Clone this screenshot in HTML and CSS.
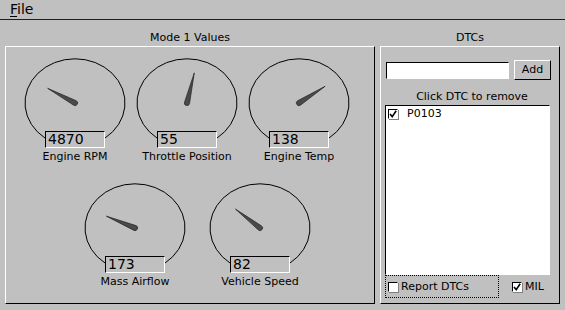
FILE: index.html
```html
<!DOCTYPE html>
<html>
<head>
    <title>OBD Simulator</title>
    <meta http-equiv="Content-Type" content="text/html;charset=utf-8">
    <link rel="stylesheet" href="styles.css">
</head>
<body>
<div class="menubar"><span class="menu-item"><u>F</u>ile</span></div>
<div class="main">
    <section class="group group-mode">
        <div class="group-title">Mode 1 Values</div>
        <div class="frame frame-mode">
            <div class="gauge-row row-top">
                <div class="gauge">
                    <svg class="dial" width="100" height="82" viewBox="0 0 100 82">
                        <path class="arc" d="M20 79 A50 44 0 1 1 80 79"/>
                        <g transform="translate(50 44) rotate(-61.8)"><path class="needle" d="M0 -31 L2.6 0 A2.6 2.6 0 0 1 -2.6 0 Z"/></g>
                    </svg>
                    <div class="readout">4870</div>
                    <div class="gauge-label">Engine RPM</div>
                </div>
                <div class="gauge">
                    <svg class="dial" width="100" height="82" viewBox="0 0 100 82">
                        <path class="arc" d="M20 79 A50 44 0 1 1 80 79"/>
                        <g transform="translate(50 44) rotate(13.6)"><path class="needle" d="M0 -31 L2.6 0 A2.6 2.6 0 0 1 -2.6 0 Z"/></g>
                    </svg>
                    <div class="readout">55</div>
                    <div class="gauge-label">Throttle Position</div>
                </div>
                <div class="gauge">
                    <svg class="dial" width="100" height="82" viewBox="0 0 100 82">
                        <path class="arc" d="M20 79 A50 44 0 1 1 80 79"/>
                        <g transform="translate(50 44) rotate(57.4)"><path class="needle" d="M0 -31 L2.6 0 A2.6 2.6 0 0 1 -2.6 0 Z"/></g>
                    </svg>
                    <div class="readout">138</div>
                    <div class="gauge-label">Engine Temp</div>
                </div>
            </div>
            <div class="gauge-row row-bottom">
                <div class="gauge">
                    <svg class="dial" width="100" height="82" viewBox="0 0 100 82">
                        <path class="arc" d="M20 79 A50 44 0 1 1 80 79"/>
                        <g transform="translate(50 44) rotate(-67.5)"><path class="needle" d="M0 -31 L2.6 0 A2.6 2.6 0 0 1 -2.6 0 Z"/></g>
                    </svg>
                    <div class="readout">173</div>
                    <div class="gauge-label">Mass Airflow</div>
                </div>
                <div class="gauge">
                    <svg class="dial" width="100" height="82" viewBox="0 0 100 82">
                        <path class="arc" d="M20 79 A50 44 0 1 1 80 79"/>
                        <g transform="translate(50 44) rotate(-52.4)"><path class="needle" d="M0 -31 L2.6 0 A2.6 2.6 0 0 1 -2.6 0 Z"/></g>
                    </svg>
                    <div class="readout">82</div>
                    <div class="gauge-label">Vehicle Speed</div>
                </div>
            </div>
        </div>
    </section>
    <section class="group group-dtc">
        <div class="group-title">DTCs</div>
        <div class="frame frame-dtc">
            <div class="add-row">
                <div class="dtc-input"></div>
                <div class="btn">Add</div>
            </div>
            <div class="list-title">Click DTC to remove</div>
            <div class="dtc-list">
                <div class="dtc-item">
                    <span class="check"><svg width="8" height="8" viewBox="0 0 8 8"><path d="M1 4 L3.2 6.6 L7.2 0.8"/></svg></span>
                    <span>P0103</span>
                </div>
            </div>
            <div class="options">
                <div class="opt opt-report"><span class="check"></span>Report DTCs</div>
                <div class="opt opt-mil"><span class="check"><svg width="8" height="8" viewBox="0 0 8 8"><path d="M1 4 L3.2 6.6 L7.2 0.8"/></svg></span>MIL</div>
            </div>
        </div>
    </section>
</div>
</body>
</html>
```

FILE: styles.css
```css
*{box-sizing: border-box;}
body{margin:0;padding:0;width:565px;height:310px;overflow:hidden;background-color:#c0c0c0;font-family:"DejaVu Sans",sans-serif;font-size:11px;color:#000;}
.menubar{height:20px;border-bottom:1px solid #1e1e1e;padding-left:10px;font-size:14px;line-height:19px;}
.menu-item u{text-decoration-thickness:1px;text-underline-offset:2px;}
.main{display:flex;gap:5px;padding:10px 5px 0 5px;}
.group-title{height:16px;line-height:16px;text-align:center;}
.frame{height:258px;border:1px solid;border-color:#fff #000 #000 #fff;}
.group-mode .frame{width:370px;}
.group-dtc .frame{width:180px;}

/* gauges */
.frame-mode{padding-top:12px;}
.gauge-row{display:flex;}
.row-top{padding-left:19px;gap:12px;}
.row-bottom{padding-left:79px;gap:25px;margin-top:20px;}
.gauge{width:100px;display:flex;flex-direction:column;}
.dial{display:block;overflow:visible;}
.arc{fill:none;stroke:#000;stroke-width:1;}
.needle{fill:#4a4a4a;stroke:#1c1c1c;stroke-width:.6;}
.readout{position:relative;width:60px;height:17px;margin:-10px 0 0 20px;padding-left:2px;border:1px solid;border-color:#000 #fff #fff #000;background:#c0c0c0;font-size:14px;line-height:15px;}
.gauge-label{margin-top:2px;line-height:14px;text-align:center;white-space:nowrap;}

/* dtc side */
.frame-dtc{padding:13px 0 0 4px;}
.add-row{display:flex;align-items:center;height:20px;padding-left:1px;}
.dtc-input{width:123px;height:17px;background:#fff;border:1px solid;border-color:#000 #fff #fff #000;}
.btn{width:37px;height:20px;margin-left:5px;border:1px solid;border-color:#fff #000 #000 #fff;text-align:center;line-height:18px;}
.list-title{padding-top:8px;height:25px;line-height:17px;text-align:center;}
.dtc-list{width:165px;height:170px;background:#fff;border:1px solid;border-color:#000 #fff #fff #000;padding:2px 0 0 2px;}
.dtc-item{display:flex;align-items:center;gap:9px;height:11px;}
.check{display:inline-flex;align-items:center;justify-content:center;width:10px;height:10px;flex:none;background:#fff;border:1px solid;border-color:#000 #fff #fff #000;box-shadow:1px 1px 0 #808080;}
.check svg{display:block;}
.check path{fill:none;stroke:#000;stroke-width:1.6;}
.options{display:flex;align-items:center;height:23px;}
.opt{display:flex;align-items:center;gap:3px;height:23px;}
.opt-report{width:114px;padding-left:2px;border:1px dotted #000;}
.opt-mil{margin-left:13px;}
```
